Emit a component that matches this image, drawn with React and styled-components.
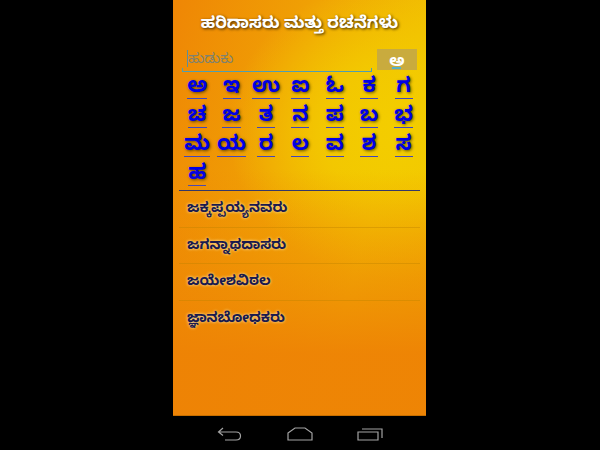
import styled, { createGlobalStyle } from "styled-components";

const GlobalStyle = createGlobalStyle`
  html, body {
    margin: 0;
    height: 100%;
    background: #000;
  }
  body {
    font-family: "Noto Sans", "Noto Sans Kannada", "Liberation Sans", sans-serif;
  }
`;

const Page = styled.div`
  width: 600px;
  height: 450px;
  display: flex;
  justify-content: center;
  background: #000;
  overflow: hidden;
`;

const Phone = styled.div`
  width: 253px;
  height: 450px;
  margin-right: 1px;
  display: flex;
  flex-direction: column;
`;

const Screen = styled.div`
  height: 416px;
  display: flex;
  flex-direction: column;
  padding: 0 6px;
  box-sizing: border-box;
  border-bottom: 1px solid #c76f00;
  background:
    radial-gradient(ellipse 170px 150px at 225px 130px, #f3cd00 0%, rgba(243, 205, 0, 0.8) 45%, rgba(243, 205, 0, 0) 100%),
    linear-gradient(105deg, #ef8605 0%, #f0a204 40%, #f1bb02 70%, #f0b400 100%),
    #ef8a05;
  position: relative;

  &::after {
    content: "";
    position: absolute;
    inset: 170px 0 0 0;
    background: linear-gradient(180deg, rgba(238, 130, 5, 0) 0%, rgba(238, 130, 5, 0.95) 75%);
    pointer-events: none;
  }
`;

const Title = styled.h1`
  margin: 0;
  padding-top: 10px;
  height: 39px;
  box-sizing: border-box;
  font-size: 16.8px;
  line-height: 24px;
  font-weight: 700;
  color: #fff;
  text-align: center;
  text-shadow: 1px 1px 3px #3a2600;
`;

const SearchRow = styled.div`
  display: flex;
  align-items: flex-start;
  gap: 5px;
  box-sizing: border-box;
  padding: 10px 3px 0;
  height: 33px;
`;

const SearchField = styled.div`
  width: 190px;
  height: 23px;
  box-sizing: border-box;
  border-bottom: 1px solid #4f9fb0;
  padding: 0 1px 0 6px;
  font-size: 14px;
  line-height: 18px;
  color: #7d8270;
  position: relative;

  /* text cursor */
  &::before {
    content: "";
    position: absolute;
    left: 5px;
    top: 1px;
    width: 1px;
    height: 17px;
    background: #5a8f9a;
  }

  /* end ticks of the underline */
  &::after {
    content: "";
    position: absolute;
    left: 0;
    right: 0;
    bottom: 0;
    height: 3px;
    border-left: 1px solid #4f9fb0;
    border-right: 1px solid #4f9fb0;
  }
`;

const SearchButton = styled.button`
  width: 40px;
  height: 21px;
  border: none;
  padding: 0;
  background: #c9ab3e;
  color: #fff;
  font-family: inherit;
  font-size: 16px;
  font-weight: 700;
  line-height: 18px;
  position: relative;

  &::after {
    content: "";
    position: absolute;
    left: 15px;
    bottom: 1px;
    width: 9px;
    height: 2px;
    background: #56b0c8;
  }
`;

const LetterGrid = styled.div`
  display: grid;
  grid-template-columns: repeat(7, 34.4px);
  grid-auto-rows: 29px;
  padding: 0 1px;
  justify-items: center;
`;

const Letter = styled.a`
  height: 27px;
  min-width: 18px;
  text-align: center;
  box-sizing: border-box;
  border-bottom: 1px solid #3f45c0;
  font-size: 21px;
  line-height: 25px;
  font-weight: 700;
  color: #0000e6;
  text-shadow: 1px 1px 3px rgba(60, 50, 0, 0.8);
`;

const Divider = styled.hr`
  margin: 2px 0 0;
  border: none;
  height: 1px;
  background: #34386a;
  position: relative;
  z-index: 1;
`;

const List = styled.ul`
  margin: 0;
  padding: 0;
  list-style: none;
  position: relative;
  z-index: 1;
`;

const Row = styled.li`
  height: 36.6px;
  box-sizing: border-box;
  padding-left: 8px;
  border-bottom: 1px solid rgba(190, 130, 0, 0.4);
  font-size: 14.3px;
  line-height: 31px;
  font-weight: 700;
  color: #1a1a4e;
  text-shadow: 0 0 3px #fff0b8;

  &:last-child {
    border-bottom: none;
  }
`;

const NavBar = styled.nav`
  flex: 1;
  display: flex;
  align-items: center;
  justify-content: center;
  gap: 44px;
  background: #000;
  padding: 1px 0 0 1px;
`;

const NavIcon = styled.svg`
  width: 26px;
  height: 16px;
  fill: none;
  stroke: #a3a3a3;
  stroke-width: 1.2;
`;

const letters = [
  "ಅ", "ಇ", "ಉ", "ಐ", "ಓ", "ಕ", "ಗ",
  "ಚ", "ಜ", "ತ", "ನ", "ಪ", "ಬ", "ಭ",
  "ಮ", "ಯ", "ರ", "ಲ", "ವ", "ಶ", "ಸ",
  "ಹ",
];

const names = ["ಜಕ್ಕಪ್ಪಯ್ಯನವರು", "ಜಗನ್ನಾಥದಾಸರು", "ಜಯೇಶವಿಠಲ", "ಜ್ಞಾನಬೋಧಕರು"];

export default function App() {
  return (
    <>
      <GlobalStyle />
      <Page>
        <Phone>
          <Screen>
            <Title>ಹರಿದಾಸರು ಮತ್ತು ರಚನೆಗಳು</Title>
            <SearchRow>
              <SearchField>ಹುಡುಕು</SearchField>
              <SearchButton>ಅ</SearchButton>
            </SearchRow>
            <LetterGrid>
              {letters.map((l) => (
                <Letter key={l}>{l}</Letter>
              ))}
            </LetterGrid>
            <Divider />
            <List>
              {names.map((n) => (
                <Row key={n}>{n}</Row>
              ))}
            </List>
          </Screen>
          <NavBar>
            <NavIcon viewBox="0 0 26 16">
              <path d="M6 2 1.5 6 6 9.5M1.5 6H19c6 0 6 8 0 8H8" />
            </NavIcon>
            <NavIcon viewBox="0 0 26 16">
              <path d="M1 7 8 2h10l7 5v7H1z" />
            </NavIcon>
            <NavIcon viewBox="0 0 26 16">
              <path d="M1 6h20v8H1zM5 3h20v9" />
            </NavIcon>
          </NavBar>
        </Phone>
      </Page>
    </>
  );
}
